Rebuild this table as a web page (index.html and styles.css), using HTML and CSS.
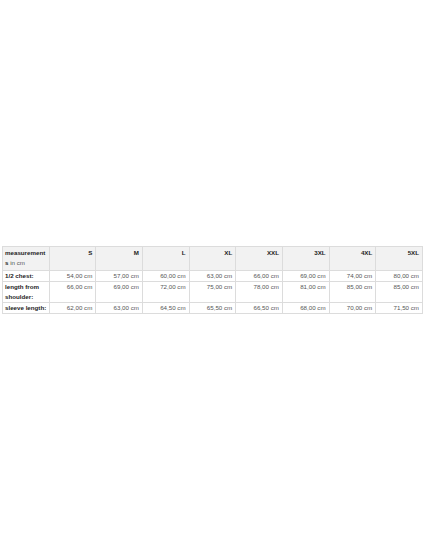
FILE: index.html
```html
<!DOCTYPE html>
<html>
<head>
<meta charset="utf-8">
<link rel="stylesheet" href="styles.css">
</head>
<body>
<div class="wrap">
<table class="size-table">
  <thead>
    <tr>
      <th class="label"><strong class="strong">measurement</strong><wbr><strong class="strong">s</strong> in cm</th>
      <th>S</th><th>M</th><th>L</th><th>XL</th><th>XXL</th><th>3XL</th><th>4XL</th><th>5XL</th>
    </tr>
  </thead>
  <tbody>
    <tr>
      <th class="label">1/2 chest:</th>
      <td>54,00 cm</td><td>57,00 cm</td><td>60,00 cm</td><td>63,00 cm</td><td>66,00 cm</td><td>69,00 cm</td><td>74,00 cm</td><td>80,00 cm</td>
    </tr>
    <tr>
      <th class="label">length from shoulder:</th>
      <td>66,00 cm</td><td>69,00 cm</td><td>72,00 cm</td><td>75,00 cm</td><td>78,00 cm</td><td>81,00 cm</td><td>85,00 cm</td><td>85,00 cm</td>
    </tr>
    <tr>
      <th class="label">sleeve length:</th>
      <td>62,00 cm</td><td>63,00 cm</td><td>64,50 cm</td><td>65,50 cm</td><td>66,50 cm</td><td>68,00 cm</td><td>70,00 cm</td><td>71,50 cm</td>
    </tr>
  </tbody>
</table>
</div>
</body>
</html>
```
FILE: styles.css
```css
html, body {
  margin: 0;
  padding: 0;
  background: #ffffff;
}
.wrap {
  height: 560px;
  display: flex;
  align-items: center;
  justify-content: center;
}
.size-table {
  width: 421px;
  table-layout: fixed;
  border-collapse: collapse;
  font-family: "Liberation Sans", Arial, sans-serif;
  font-size: 6.2px;
  line-height: 10px;
  color: #555555;
}
.size-table th,
.size-table td {
  border: 1px solid #dcdcdc;
  padding: 0 3px 0 2px;
  vertical-align: top;
  text-align: right;
  overflow-wrap: anywhere;
}
.size-table thead th {
  background: #f2f2f2;
  font-weight: bold;
  color: #222222;
  padding-top: 1px;
  padding-bottom: 2px;
}
.size-table th.label {
  text-align: left;
  font-weight: bold;
  color: #222222;
  padding-right: 1px;
}
.size-table thead th.label {
  font-weight: normal;
  color: #555555;
}
.strong {
  font-weight: bold;
  color: #222222;
}
```
